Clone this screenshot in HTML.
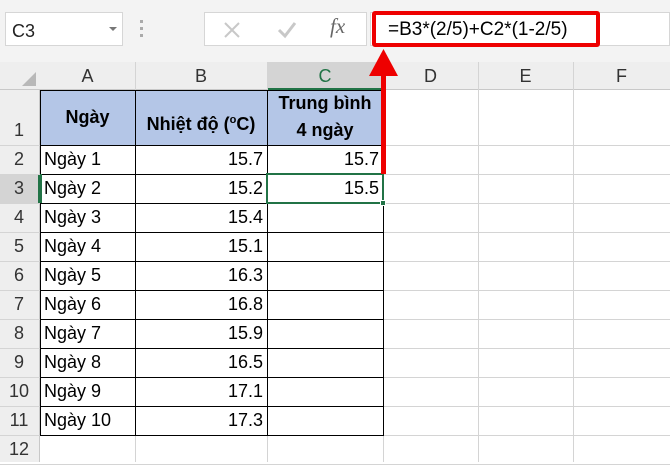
<!DOCTYPE html>
<html><head><meta charset="utf-8"><style>
*{margin:0;padding:0;box-sizing:border-box}
body{width:670px;height:462px;overflow:hidden;background:#fff;font-family:"Liberation Sans",sans-serif;position:relative}
.a{position:absolute}
.t{font-size:18px;color:#000;line-height:29px;white-space:nowrap}
</style></head><body>
<div class="a" style="left:0;top:0;width:670px;height:62px;background:#f3f3f3"></div>
<div class="a" style="left:5px;top:12px;width:118px;height:34px;background:#fff;border:1px solid #d6d6d6"></div>
<div class="a t" style="left:12px;top:17px;font-size:18px;color:#222">C3</div>
<div class="a" style="left:109px;top:27px;width:0;height:0;border-left:4px solid transparent;border-right:4px solid transparent;border-top:4px solid #777"></div>
<div class="a" style="left:140px;top:20px;width:3px;height:3px;background:#aaa;box-shadow:0 7px 0 #aaa,0 14px 0 #aaa"></div>
<div class="a" style="left:204px;top:12px;width:163px;height:34px;background:#fff;border:1px solid #d6d6d6"></div>
<svg class="a" style="left:222px;top:20px" width="20" height="20"><path d="M3 3L17 17M17 3L3 17" stroke="#c8c8c8" stroke-width="2"/></svg>
<svg class="a" style="left:276px;top:20px" width="22" height="20"><path d="M3 10L9 16L19 3" stroke="#c8c8c8" stroke-width="3" fill="none"/></svg>
<div class="a" style="left:330px;top:14px;font-family:'Liberation Serif',serif;font-style:italic;font-size:21px;color:#666">fx</div>
<div class="a" style="left:370px;top:12px;width:300px;height:34px;background:#fff;border:1px solid #d6d6d6"></div>
<div class="a" style="left:372px;top:11px;width:228px;height:36px;border:4px solid #e00;border-radius:3px"></div>
<div class="a t" style="left:388px;top:15px;font-size:19px">=B3*(2/5)+C2*(1-2/5)</div>
<div class="a" style="left:0;top:62px;width:670px;height:28px;background:#eeeeee;border-bottom:1px solid #c8c8c8"></div>
<div class="a" style="left:267px;top:62px;width:116px;height:28px;background:#d4d4d4;border-bottom:2px solid #217346"></div>
<svg class="a" style="left:20px;top:70px" width="18" height="18"><path d="M16 2L16 16L2 16Z" fill="#b8b8b8"/></svg>
<div class="a" style="left:0;top:90px;width:40px;height:372px;background:#eeeeee;border-right:1px solid #c8c8c8"></div>
<div class="a" style="left:0;top:174px;width:40px;height:29px;background:#d4d4d4;border-right:2px solid #217346"></div>
<div id="g"></div>
<script>
var h='';var cols=[[40,135,'A'],[135,267,'B'],[267,383,'C'],[383,478,'D'],[478,573,'E'],[573,670,'F']];
cols.forEach(function(c){h+='<div class="a" style="left:'+c[1]+'px;top:62px;width:1px;height:400px;background:#d4d4d4"></div>';
h+='<div class="a t" style="left:'+c[0]+'px;top:62px;width:'+(c[1]-c[0])+'px;text-align:center;line-height:29px;color:'+(c[2]=='C'?'#217346':'#333')+'">'+c[2]+'</div>';});
var rows=[90,145];for(var i=1;i<11;i++)rows.push(145+29*i);rows.push(464);
for(var r=0;r<rows.length-1;r++){h+='<div class="a" style="left:0;top:'+rows[r+1]+'px;width:670px;height:1px;background:#d4d4d4"></div>';
h+='<div class="a t" style="left:0;top:'+(rows[r+1]-29)+'px;width:38px;text-align:center;color:#333">'+(r+1)+'</div>';}
h+='<div class="a" style="left:40px;top:90px;width:343px;height:55px;background:#b4c6e7"></div>';
var d=[['Ngày 1',15.7],['Ngày 2',15.2],['Ngày 3',15.4],['Ngày 4',15.1],['Ngày 5',16.3],['Ngày 6',16.8],['Ngày 7',15.9],['Ngày 8',16.5],['Ngày 9',17.1],['Ngày 10',17.3]];
d.forEach(function(x,i){var y=145+29*i;h+='<div class="a t" style="left:44px;top:'+y+'px">'+x[0]+'</div><div class="a t" style="left:135px;top:'+y+'px;width:128px;text-align:right">'+x[1]+'</div>';});
[40,135,267,383].forEach(function(x){h+='<div class="a" style="left:'+x+'px;top:90px;width:1px;height:346px;background:#000"></div>';});
rows.slice(0,12).forEach(function(y){h+='<div class="a" style="left:40px;top:'+y+'px;width:344px;height:1px;background:#000"></div>';});
document.getElementById('g').outerHTML=h;
</script>
<div class="a t" style="left:40px;top:103px;width:95px;text-align:center;font-weight:bold">Ngày</div>
<div class="a t" style="left:135px;top:106px;width:132px;text-align:center;font-weight:bold;font-size:18px">Nhiệt độ (<sup style="font-size:11px">o</sup>C)</div>
<div class="a t" style="left:267px;top:90px;width:116px;text-align:center;font-weight:bold;font-size:18px;line-height:27px">Trung bình<br>4 ngày</div>
<div class="a t" style="left:267px;top:145px;width:112px;text-align:right">15.7</div>
<div class="a t" style="left:267px;top:174px;width:112px;text-align:right">15.5</div>
<div class="a" style="left:266px;top:173px;width:118px;height:31px;border:2px solid #217346"></div>
<div class="a" style="left:380px;top:200px;width:6px;height:6px;background:#217346;border:1px solid #fff"></div>
<div class="a" style="left:40px;top:174px;width:2px;height:29px;background:#217346"></div>
<div class="a" style="left:381px;top:72px;width:5px;height:102px;background:#e00"></div>
<svg class="a" style="left:369px;top:49px" width="29" height="27"><path d="M14.5 0L29 27L0 27Z" fill="#e00"/></svg>
</body></html>
